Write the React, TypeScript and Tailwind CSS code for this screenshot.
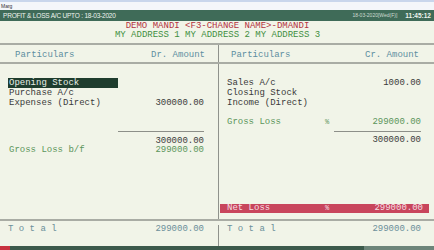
export default function App() {
  const mono = { fontFamily: '"Liberation Mono", "DejaVu Sans Mono", monospace' };

  return (
    <div className="w-[434px] h-[250px] overflow-hidden flex flex-col bg-[#f1f4e8] text-[9px]" style={mono}>
      {/* window strip */}
      <div className="h-[10px] bg-[#f4f6fa] border-t-[2px] border-[#c9d6ec] flex items-center px-[1px]">
        <span className="text-[5px] leading-[5px] text-[#333] font-['Liberation_Sans',sans-serif]">Marg</span>
      </div>

      {/* title bar */}
      <div className="h-[11px] bg-[#3f6b58] flex items-center justify-between px-[3px] text-[#eef4ee] font-['Liberation_Sans',sans-serif]">
        <span className="text-[6.5px] leading-[7px] tracking-[-0.2px]">PROFIT &amp; LOSS A/C UPTO : 18-03-2020</span>
        <div className="flex items-center gap-[8px]">
          <span className="text-[5px] leading-[5px] text-[#cfdcd2]">18-03-2020[Wed(F)]</span>
          <span className="text-[6.5px] leading-[7px] font-bold">11:45:12</span>
        </div>
      </div>

      {/* company */}
      <div className="h-[22px] flex flex-col items-center">
        <div className="leading-[9px] h-[9px] text-[#b3333f] pl-[1px] mt-[1px]">DEMO MANDI &lt;F3-CHANGE NAME&gt;-DMANDI</div>
        <div className="leading-[9px] h-[9px] text-[#3f8f3f] pl-[1px]">MY ADDRESS 1 MY ADDRESS 2 MY ADDRESS 3</div>
      </div>

      {/* header */}
      <div className="h-[21px] border-t-[2px] border-b-[2px] border-[#a9aca4] flex text-[#5d8ea0] leading-[10px]">
        <div className="w-[219px] border-r border-[#8f928c] flex items-center justify-between pl-[15px] pr-[13px] pt-[2px]">
          <span>Particulars</span>
          <span>Dr. Amount</span>
        </div>
        <div className="flex-1 flex items-center justify-between pl-[12px] pr-[15px] pt-[2px]">
          <span>Particulars</span>
          <span>Cr. Amount</span>
        </div>
      </div>

      {/* body */}
      <div className="flex-1 flex leading-[10px] text-[#3a3a3a]">
        <div className="w-[219px] border-r border-[#8f928c] flex flex-col pt-[14px] pl-[8px] pr-[14px]">
          <div className="h-[10px] w-[110px] bg-[#1f3d2e] text-[#e8efe8] pl-[1px]">Opening Stock</div>
          <div className="h-[10px] pl-[1px]">Purchase A/c</div>
          <div className="h-[10px] pl-[1px] flex justify-between">
            <span>Expenses (Direct)</span>
            <span>300000.00</span>
          </div>
          <div className="mt-[23px] ml-[110px] h-[1px] bg-[#8d8f89]"></div>
          <div className="mt-[4px] h-[10px] text-right">300000.00</div>
          <div className="h-[9px] leading-[9px] pl-[1px] flex justify-between text-[#5b955b]">
            <span>Gross Loss b/f</span>
            <span>299000.00</span>
          </div>
        </div>

        <div className="flex-1 flex flex-col pt-[14px]">
          <div className="pl-[8px] pr-[13px] flex flex-col">
            <div className="h-[10px] flex justify-between">
              <span>Sales A/c</span>
              <span>1000.00</span>
            </div>
            <div className="h-[10px]">Closing Stock</div>
            <div className="h-[10px]">Income (Direct)</div>
            <div className="mt-[9px] h-[10px] flex text-[#5b955b]">
              <span className="w-[98px]">Gross Loss</span>
              <span className="text-[7px]">%</span>
              <span className="ml-auto">299000.00</span>
            </div>
            <div className="mt-[4px] ml-[107px] h-[1px] bg-[#8d8f89]"></div>
            <div className="mt-[3px] h-[10px] text-right">300000.00</div>
          </div>
          <div className="mt-auto mb-[6px] ml-[1px] mr-[5px] h-[9px] leading-[9px] bg-[#c8455c] text-[#f6dfe3] flex pl-[7px] pr-[6px]">
            <span className="w-[98px]">Net Loss</span>
            <span className="text-[7px]">%</span>
            <span className="ml-auto">299000.00</span>
          </div>
        </div>
      </div>

      {/* total */}
      <div className="h-[27px] border-t-[2px] border-[#a9aca4] flex text-[#6b8f9a] pt-[4px]">
        <div className="w-[219px] border-r border-[#8f928c] flex justify-between pl-[8px] pr-[14px] leading-[9px]">
          <span className="whitespace-pre">T o t a l</span>
          <span>299000.00</span>
        </div>
        <div className="flex-1 flex justify-between pl-[8px] pr-[13px] leading-[9px]">
          <span className="whitespace-pre">T o t a l</span>
          <span>299000.00</span>
        </div>
      </div>

      {/* status strip */}
      <div className="h-[4px] bg-[#3c5a4b] flex">
        <div className="w-[10px] bg-[#c8323f]"></div>
        <div className="ml-auto w-[70px] bg-[#6d857a]"></div>
      </div>
    </div>
  );
}
